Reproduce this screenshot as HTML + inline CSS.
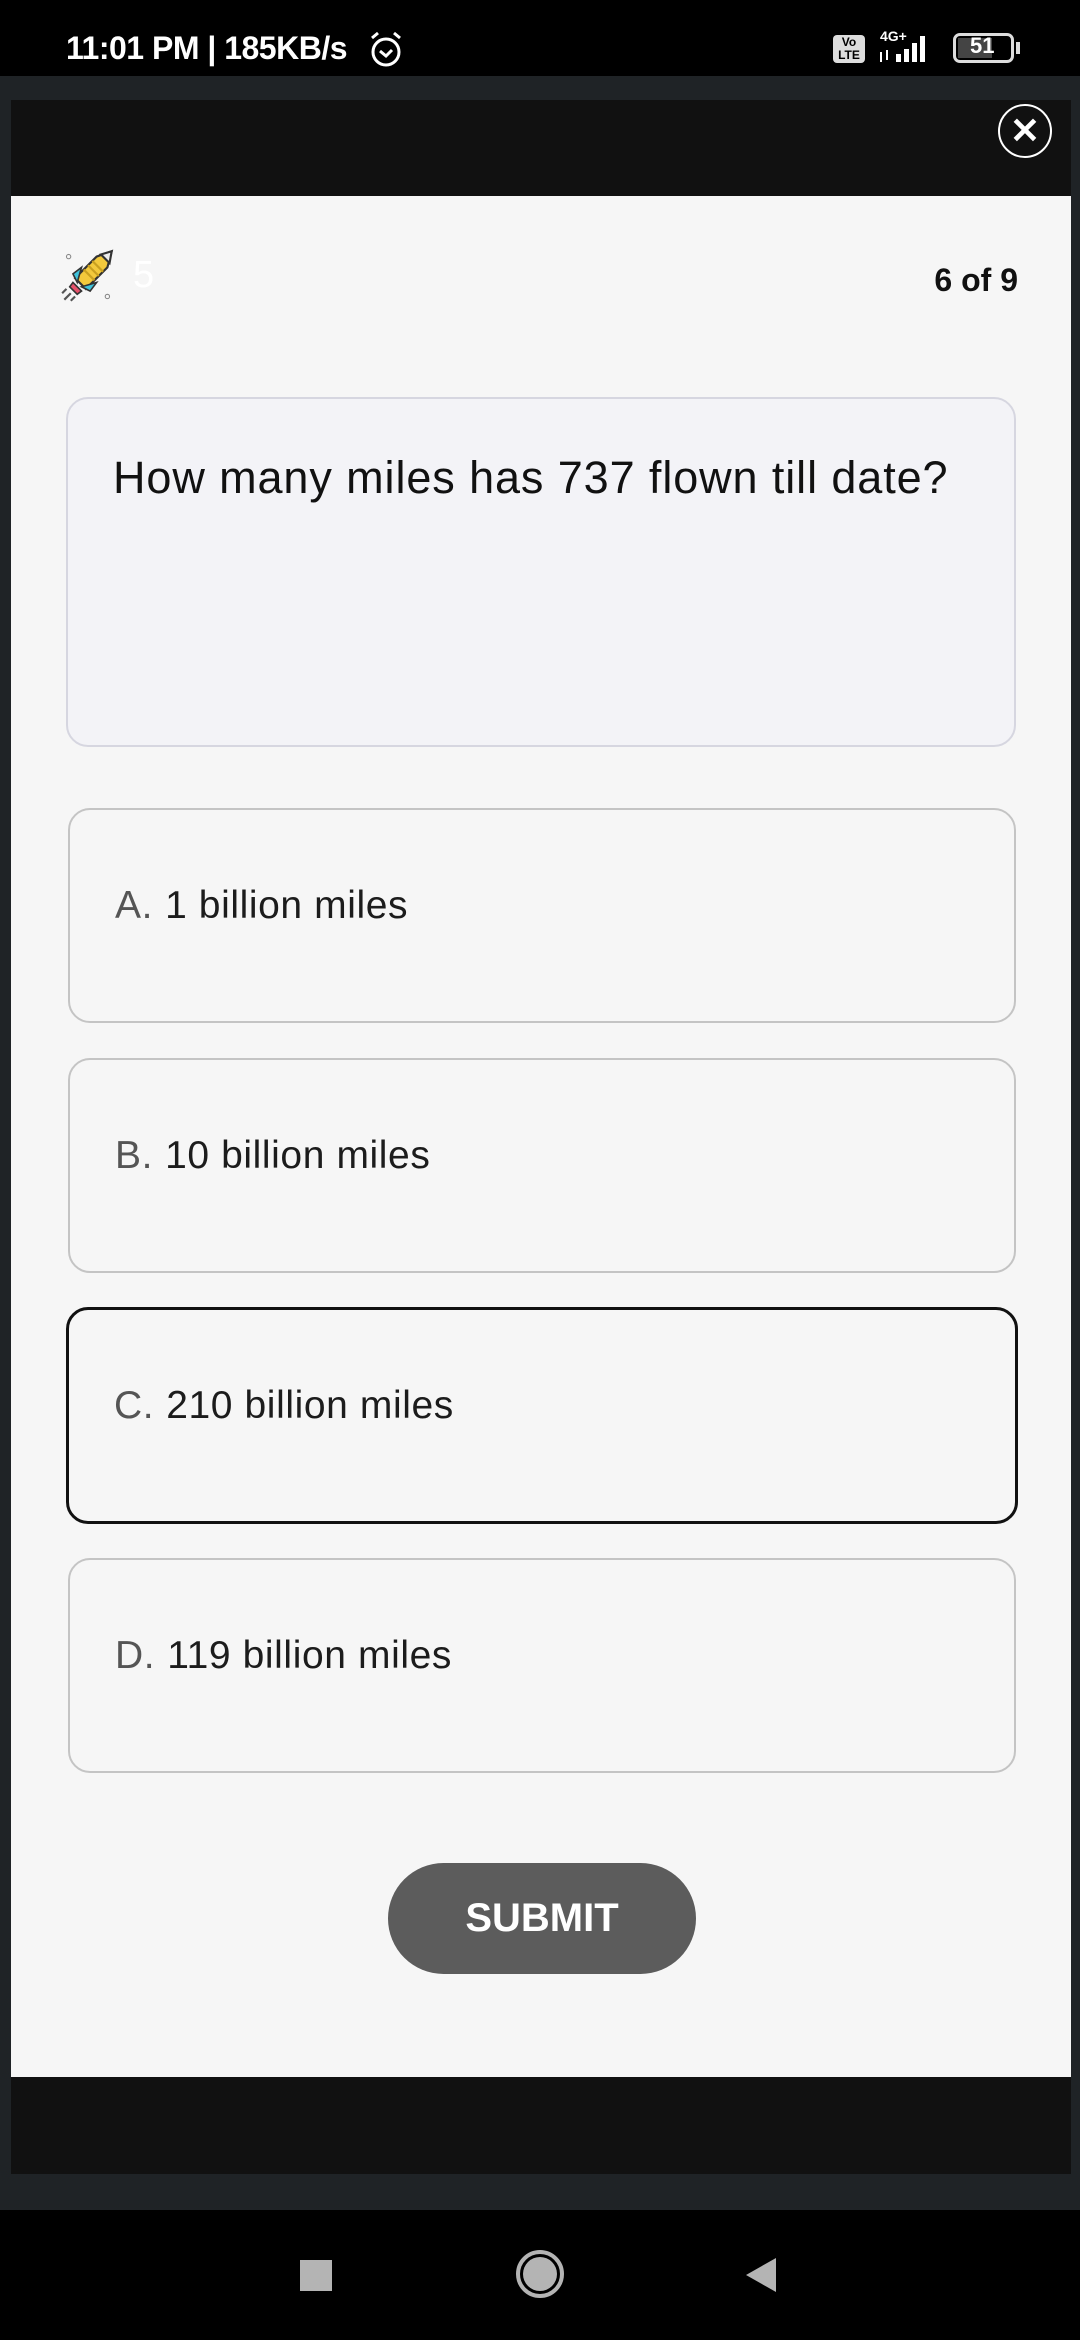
<!DOCTYPE html>
<html><head><meta charset="utf-8"><style>
*{margin:0;padding:0;box-sizing:border-box}
body{width:1080px;height:2340px;background:#000;position:relative;overflow:hidden;font-family:"Liberation Sans",sans-serif}
.abs{position:absolute}
.opt{position:absolute;left:68px;width:948px;height:215px;border:2.5px solid #c4c4c4;border-radius:22px;background:#f6f6f6}
.opt span{position:absolute;left:45px;top:74px;font-size:39px;letter-spacing:0.6px;color:#1c1c1c}
.opt b{font-weight:normal;color:#555;margin-right:12px}
</style></head><body>
<div class="abs" style="left:66px;top:30px;font-size:32px;font-weight:bold;color:#fff;letter-spacing:-0.5px">11:01 PM | 185KB/s</div>
<svg class="abs" style="left:368px;top:30px" width="36" height="40" viewBox="0 0 36 40"><circle cx="18" cy="22" r="13" fill="none" stroke="#fff" stroke-width="3"/><path d="M12 21l6 5 6-6" fill="none" stroke="#fff" stroke-width="3"/><path d="M4 8l6-5M32 8l-6-5" stroke="#fff" stroke-width="3"/></svg>
<div class="abs" style="left:833px;top:35px;width:32px;height:28px;background:#ddd;border-radius:4px;font-size:12px;font-weight:bold;line-height:13px;color:#000;text-align:center;padding-top:1px">Vo<br>LTE</div>
<div class="abs" style="left:880px;top:28px;font-size:14px;font-weight:bold;color:#fff">4G+</div>
<svg class="abs" style="left:878px;top:34px" width="60" height="30"><rect x="18" y="20" width="5" height="8" fill="#fff"/><rect x="26" y="15" width="5" height="13" fill="#fff"/><rect x="34" y="9" width="5" height="19" fill="#fff"/><rect x="42" y="2" width="5" height="26" fill="#fff"/><path d="M3 18v10M9 16v10" stroke="#fff" stroke-width="2"/></svg>
<div class="abs" style="left:953px;top:33px;width:61px;height:30px;border:3px solid #ddd;border-radius:7px"></div>
<div class="abs" style="left:958px;top:38px;width:34px;height:20px;background:#444"></div>
<div class="abs" style="left:970px;top:33px;font-size:22px;font-weight:bold;color:#fff">51</div>
<div class="abs" style="left:1016px;top:42px;width:4px;height:12px;background:#ddd"></div>

<div class="abs" style="left:0;top:76px;width:1080px;height:2134px;background:#1f2326"></div>
<div class="abs" style="left:11px;top:100px;width:1060px;height:2074px;background:#111"></div>
<div class="abs" style="left:11px;top:196px;width:1060px;height:1881px;background:#f6f6f6"></div>
<div class="abs" style="left:998px;top:104px;width:54px;height:54px;border:2px solid #fff;border-radius:50%;color:#fff;font-size:36px;font-weight:bold;text-align:center;line-height:50px">✕</div>

<svg class="abs" style="left:60px;top:248px" width="56" height="56" viewBox="0 0 52 52"><path d="M48 3L34 8 14 28l10 10 20-20z" fill="#f3c93c" stroke="#333" stroke-width="2"/><path d="M22 20l10 10M26 16l10 10M30 12l10 10" stroke="#c9a020" stroke-width="2"/><path d="M48 3L38 6l8 8z" fill="#eee" stroke="#333" stroke-width="2"/><path d="M12 24l8-6-4 14zM28 40l6-8-14 4z" fill="#3fc3dc" stroke="#333" stroke-width="1.5"/><path d="M12 32l8 8-4 3-7-7z" fill="#e6516a" stroke="#333" stroke-width="1.5"/><path d="M10 42l-6 6M14 45l-4 4M6 38l-4 4" stroke="#555" stroke-width="2"/><circle cx="8" cy="8" r="2" fill="none" stroke="#888"/><circle cx="44" cy="45" r="2" fill="none" stroke="#888"/></svg>
<div class="abs" style="left:133px;top:254px;font-size:38px;color:#fff">5</div>
<div class="abs" style="right:62px;top:262px;font-size:32px;font-weight:bold;color:#111">6 of 9</div>

<div class="abs" style="left:66px;top:397px;width:950px;height:350px;background:#f3f3f7;border:2.5px solid #d6d6e0;border-radius:22px"></div>
<div class="abs" style="left:113px;top:452px;font-size:45px;letter-spacing:0.9px;color:#111">How many miles has 737 flown till date?</div>

<div class="opt" style="top:808px"><span><b>A.</b>1 billion miles</span></div>
<div class="opt" style="top:1058px"><span><b>B.</b>10 billion miles</span></div>
<div class="opt" style="top:1307px;border:3px solid #111;left:66px;width:952px;height:217px"><span><b>C.</b>210 billion miles</span></div>
<div class="opt" style="top:1558px"><span><b>D.</b>119 billion miles</span></div>

<div class="abs" style="left:388px;top:1863px;width:308px;height:111px;background:#5c5c5c;border-radius:56px;color:#fff;font-size:40px;font-weight:bold;text-align:center;line-height:111px">SUBMIT</div>

<div class="abs" style="left:300px;top:2260px;width:32px;height:31px;background:#b4b4b4"></div>
<div class="abs" style="left:516px;top:2250px;width:48px;height:48px;border:4px solid #b4b4b4;border-radius:50%"></div>
<div class="abs" style="left:523px;top:2257px;width:34px;height:34px;background:#b4b4b4;border-radius:50%"></div>
<svg class="abs" style="left:744px;top:2256px" width="34" height="38"><path d="M32 2v34L2 19z" fill="#b4b4b4"/></svg>
</body></html>
